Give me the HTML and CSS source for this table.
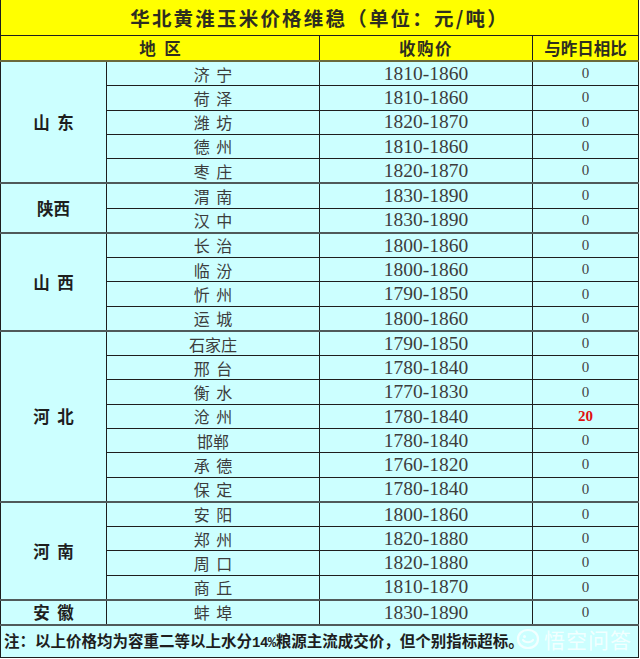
FILE: index.html
```html
<!DOCTYPE html>
<html lang="zh">
<head>
<meta charset="utf-8">
<title>华北黄淮玉米价格维稳</title>
<link rel="stylesheet" href="styles.css">
</head>
<body>
<div class="wrap">
<table class="price">
  <colgroup>
    <col class="c1"><col class="c2"><col class="c3"><col class="c4">
  </colgroup>
  <tr class="title-row"><td colspan="4" class="title">华北黄淮玉米价格维稳（单位：元/吨）</td></tr>
  <tr class="head-row">
    <td colspan="2" class="head sp2">地 区</td>
    <td class="head sp">收购价</td>
    <td class="head">与昨日相比</td>
  </tr>

  <tr class="row g first"><td rowspan="5" class="prov">山 东</td><td class="city">济 宁</td><td class="num">1810-1860</td><td class="chg">0</td></tr>
  <tr class="row"><td class="city">荷 泽</td><td class="num">1810-1860</td><td class="chg">0</td></tr>
  <tr class="row"><td class="city">潍 坊</td><td class="num">1820-1870</td><td class="chg">0</td></tr>
  <tr class="row"><td class="city">德 州</td><td class="num">1810-1860</td><td class="chg">0</td></tr>
  <tr class="row"><td class="city">枣 庄</td><td class="num">1820-1870</td><td class="chg">0</td></tr>

  <tr class="row g"><td rowspan="2" class="prov">陕西</td><td class="city">渭 南</td><td class="num">1830-1890</td><td class="chg">0</td></tr>
  <tr class="row"><td class="city">汉 中</td><td class="num">1830-1890</td><td class="chg">0</td></tr>

  <tr class="row g"><td rowspan="4" class="prov">山 西</td><td class="city">长 治</td><td class="num">1800-1860</td><td class="chg">0</td></tr>
  <tr class="row"><td class="city">临 汾</td><td class="num">1800-1860</td><td class="chg">0</td></tr>
  <tr class="row"><td class="city">忻 州</td><td class="num">1790-1850</td><td class="chg">0</td></tr>
  <tr class="row"><td class="city">运 城</td><td class="num">1800-1860</td><td class="chg">0</td></tr>

  <tr class="row g"><td rowspan="7" class="prov">河 北</td><td class="city">石家庄</td><td class="num">1790-1850</td><td class="chg">0</td></tr>
  <tr class="row"><td class="city">邢 台</td><td class="num">1780-1840</td><td class="chg">0</td></tr>
  <tr class="row"><td class="city">衡 水</td><td class="num">1770-1830</td><td class="chg">0</td></tr>
  <tr class="row"><td class="city">沧 州</td><td class="num">1780-1840</td><td class="chg up">20</td></tr>
  <tr class="row"><td class="city">邯郸</td><td class="num">1780-1840</td><td class="chg">0</td></tr>
  <tr class="row"><td class="city">承 德</td><td class="num">1760-1820</td><td class="chg">0</td></tr>
  <tr class="row"><td class="city">保 定</td><td class="num">1780-1840</td><td class="chg">0</td></tr>

  <tr class="row g"><td rowspan="4" class="prov">河 南</td><td class="city">安 阳</td><td class="num">1800-1860</td><td class="chg">0</td></tr>
  <tr class="row"><td class="city">郑 州</td><td class="num">1820-1880</td><td class="chg">0</td></tr>
  <tr class="row"><td class="city">周 口</td><td class="num">1820-1880</td><td class="chg">0</td></tr>
  <tr class="row"><td class="city">商 丘</td><td class="num">1810-1870</td><td class="chg">0</td></tr>

  <tr class="row g"><td class="prov">安 徽</td><td class="city">蚌 埠</td><td class="num">1830-1890</td><td class="chg">0</td></tr>

  <tr class="foot-row g"><td colspan="4" class="foot">注：以上价格均为容重二等以上水分<span class="pct">14%</span>粮源主流成交价，但个别指标超标。</td></tr>
</table>
<div class="mark">
  <svg class="mark-icon" width="24" height="22" viewBox="0 0 24 22">
    <path d="M12 2 C6 2 2 6 2 11 C2 16 6 20 12 20 C18 20 22 16 22 11 C22 6 18 2 12 2 Z" fill="none" stroke="rgba(255,255,255,0.75)" stroke-width="2.2"/>
    <path d="M7 12 C9 15 15 15 17 12" fill="none" stroke="rgba(255,255,255,0.75)" stroke-width="2.2" stroke-linecap="round"/>
    <circle cx="8.5" cy="8.5" r="1.5" fill="rgba(255,255,255,0.75)"/>
  </svg>
  <span class="mark-text">悟空问答</span>
</div>
</div>
</body>
</html>
```
FILE: styles.css
```css
html, body {
  margin: 0;
  padding: 0;
  background: #ffffff;
}
.wrap {
  position: relative;
  width: 640px;
  height: 659px;
}
.price {
  border-collapse: collapse;
  table-layout: fixed;
  width: 638px;
  font-family: "Noto Sans CJK SC", "Liberation Sans", sans-serif;
  color: #3a3a3a;
}
.c1 { width: 106px; }
.c2 { width: 213px; }
.c3 { width: 213px; }
.c4 { width: 106px; }

.price td {
  padding: 0;
  text-align: center;
  vertical-align: middle;
  border: 1px solid #1e1e1e;
  white-space: nowrap;
  overflow: hidden;
  line-height: 1;
}
.title-row td {
  border-top: none;
}
.title {
  height: 35px;
  background: #ffff00;
  font-weight: bold;
  font-size: 19.5px;
  letter-spacing: 2.2px;
  color: #2e2e20;
}
.head-row td {
  height: 24px;
  background: #ffff00;
  font-weight: bold;
  font-size: 16.5px;
  color: #2e2e20;
  border-bottom: 2px solid #6a6a3c;
}
.head.sp {
  letter-spacing: 1.5px;
}
.head.sp2 {
  word-spacing: 5px;
}
.row td {
  height: 23.27px;
  background: #ccffff;
}
.row.g td {
  border-top: 2px solid #505a5a;
}
.row.first td {
  border-top: 2px solid #6a6a3c;
}
.prov {
  font-weight: bold;
  font-size: 16.5px;
  color: #1e1e1e;
  word-spacing: 4px;
}
.city {
  font-size: 16px;
  word-spacing: 3px;
  color: #3c3c3c;
}
.num {
  font-family: "Liberation Serif", "DejaVu Serif", serif;
  font-size: 19.5px;
  color: #3c3c3c;
}
.chg {
  font-family: "Liberation Serif", "DejaVu Serif", serif;
  font-size: 15px;
  color: #444444;
}
.chg.up {
  color: #e01010;
  font-weight: bold;
  font-size: 15px;
}
.foot-row td {
  height: 31px;
  background: #ccffff;
  text-align: left;
  padding-left: 3px;
  font-weight: bold;
  font-size: 15.5px;
  color: #1e1e1e;
}
.foot-row.g td {
  border-top: 2px solid #505a5a;
}
.pct {
  font-family: "Liberation Mono", monospace;
  font-size: 14px;
  letter-spacing: -0.5px;
}
.mark {
  position: absolute;
  left: 516px;
  top: 628px;
  display: flex;
  align-items: center;
  gap: 4px;
}
.mark-text {
  font-family: "Noto Sans CJK SC", sans-serif;
  font-size: 21px;
  line-height: 1;
  color: rgba(255, 255, 255, 0.75);
  letter-spacing: 1px;
}
```
